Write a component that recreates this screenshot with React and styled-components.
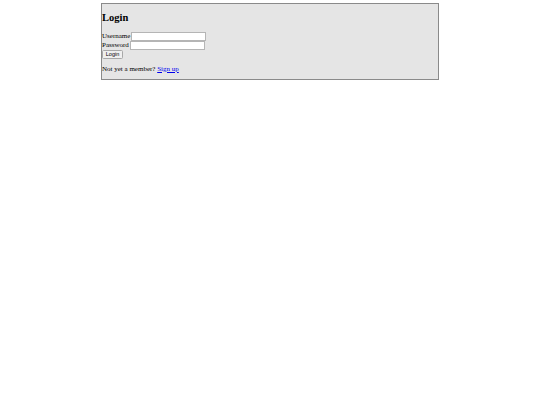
import React from "react";
import styled, { createGlobalStyle } from "styled-components";

const GlobalStyle = createGlobalStyle`
  html, body {
    margin: 0;
    padding: 0;
    background: #ffffff;
  }
  body {
    font-family: "Liberation Serif", "Times New Roman", serif;
    font-size: 7px;
    color: #000;
  }
`;

function App() {
  return (
    <>
      <GlobalStyle />
      <Panel>
        <Title>Login</Title>
        <Form onSubmit={(e) => e.preventDefault()}>
          <Row>
            <Label htmlFor="username">Username</Label>
            <Input id="username" type="text" />
          </Row>
          <Row>
            <Label htmlFor="password">Password</Label>
            <Input id="password" type="password" />
          </Row>
          <Row>
            <Button type="submit">Login</Button>
          </Row>
        </Form>
        <Footer>
          Not yet a member? <SignUp href="#">Sign up</SignUp>
        </Footer>
      </Panel>
    </>
  );
}

export default App;

const Panel = styled.div`
  box-sizing: border-box;
  width: 338px;
  height: 77px;
  margin: 3px auto 0;
  border: 1px solid #8a8a8a;
  background-color: #e5e5e5;
`;

const Title = styled.h2`
  font-size: 10.5px;
  font-weight: bold;
  line-height: 12px;
  margin: 8px 0 7.5px 0;
`;

const Form = styled.form`
  display: flex;
  flex-direction: column;
  margin: 0;
`;

const Row = styled.div`
  display: flex;
  align-items: center;
  height: 9px;
  line-height: 9px;
`;

const Label = styled.label`
  margin-right: 1px;
`;

const Input = styled.input`
  box-sizing: border-box;
  width: 75px;
  height: 9px;
  padding: 0;
  margin: 0;
  border: 1px solid #b5b5b5;
  background: #ffffff;
  font-size: 6px;
  font-family: inherit;
`;

const Button = styled.button`
  box-sizing: border-box;
  height: 9px;
  width: 21px;
  margin: 0;
  padding: 0;
  font-family: "Liberation Sans", Arial, sans-serif;
  font-size: 5.5px;
  line-height: 7px;
  color: #000;
  background: #efefef;
  border: 1px solid #a8a8a8;
  border-radius: 1.5px;
`;

const Footer = styled.p`
  margin: 6px 0 0 0;
  line-height: 8px;
`;

const SignUp = styled.a`
  color: #0000ee;
  text-decoration: underline;
`;
